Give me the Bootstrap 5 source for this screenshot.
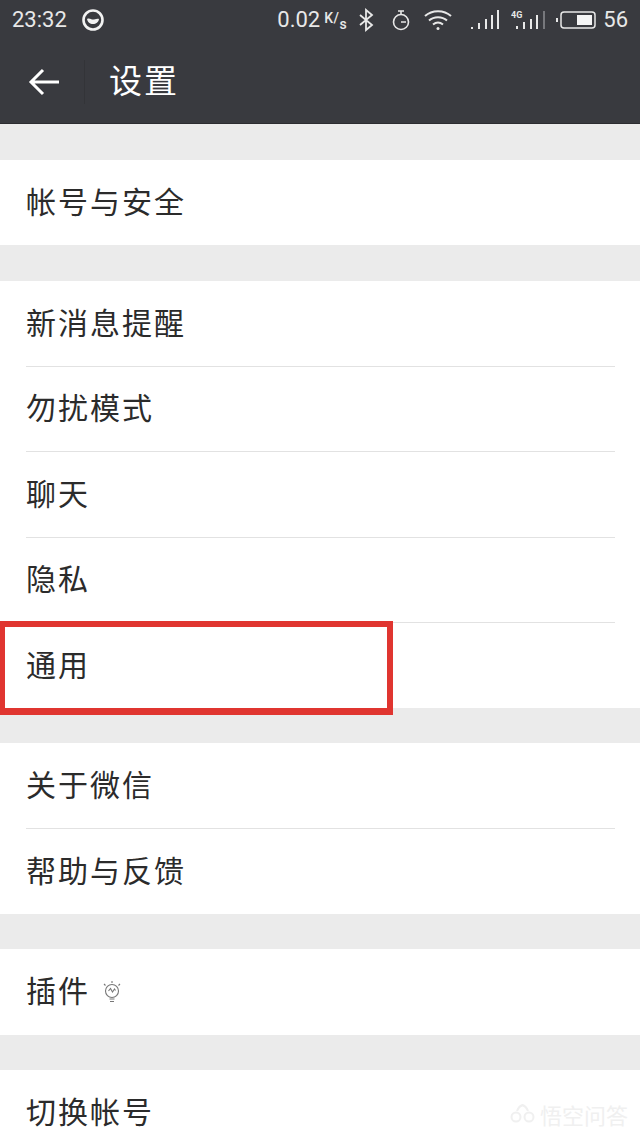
<!DOCTYPE html>
<html lang="zh-CN">
<head>
    <meta charset="UTF-8">
    <title>设置</title>
    <link href="https://cdn.jsdelivr.net/npm/bootstrap@5.3.2/dist/css/bootstrap.min.css" rel="stylesheet">
    <style>
        html, body {
            height: 1138px;
            overflow: hidden;
        }
        body {
            background-color: #ebebeb;
            font-family: "Noto Sans CJK SC", sans-serif;
        }
        .app-header {
            background-color: #393a3f;
            height: 124px;
            border-bottom: 1px solid #2c2c30;
        }
        .status-bar {
            height: 40px;
            padding: 0 12px;
            color: #e8e8e8;
            font-family: Roboto, sans-serif;
            font-size: 22px;
            line-height: 1;
        }
        .app-dot { margin-left: 14px; }
        .speed-unit {
            font-size: 14px;
            font-weight: 500;
            margin: -4px 11px 0 4px;
            letter-spacing: .5px;
            white-space: nowrap;
        }
        .speed-unit sub {
            font-size: 14px;
            bottom: -.4em;
            top: auto;
        }
        .gap-timer { margin-left: 17px; }
        .gap-wifi { margin-left: 13px; }
        .gap-signal { margin-left: 18px; }
        .gap-net { margin-left: 12px; }
        .gap-batt { margin-left: 9px; }
        .gap-level { margin-left: 7px; }
        .title-bar {
            height: 83px;
        }
        .back-btn {
            width: 85px;
            height: 44px;
            padding-left: 28px;
            border-right: 1px solid #333438;
        }
        .page-title {
            color: #fff;
            font-size: 33px;
            letter-spacing: 2px;
            margin-left: 24px;
            line-height: 1;
            padding-bottom: 5px;
        }
        .setting-group {
            margin-top: 35px;
            background-color: #fff;
        }
        .top-group {
            margin-top: 36px;
        }
        .setting-row {
            height: 85.4px;
            margin: 0 25px 0 26px;
            padding: 0 0 5px !important;
            background: transparent;
            color: #2b2b2b;
            font-size: 30px;
            letter-spacing: 2px;
            line-height: 1;
            border-color: #e2e2e2;
        }
        .bulb-icon {
            margin: 5px 0 0 12px;
        }
        .mark-box {
            position: absolute;
            left: 0;
            top: 621px;
            width: 393px;
            height: 94px;
            border: solid #e03530;
            border-width: 6px 6px 7px 5px;
        }
        .wm-wrap {
            position: absolute;
            left: 509px;
            top: 1101px;
            color: #f0f0f0;
            font-size: 22px;
            line-height: 1.2;
        }
    </style>
</head>
<body>

<header class="app-header">
    <div class="status-bar d-flex align-items-center">
        <span>23:32</span>
        <svg class="app-dot" width="24" height="24" viewBox="0 0 24 24">
            <circle cx="12" cy="12" r="9.5" fill="none" stroke="#f2f2f2" stroke-width="2.6"/>
            <path d="M6 11c3-1.5 4 1 7 .5 2-.3 3.500-1 5-.5-.5 3.500-3 5-6 5s-5.500-2-6-5z" fill="#f2f2f2"/>
        </svg>
        <span class="ms-auto">0.02</span>
        <span class="speed-unit">K/<sub>s</sub></span>
        <svg width="16" height="24" viewBox="0 0 16 24" fill="none" stroke="#e8e8e8" stroke-width="1.800">
            <path d="M2 7l12 10-6 5V2l6 5L2 17"/>
        </svg>
        <svg class="gap-timer" width="20" height="24" viewBox="0 0 20 24" fill="none" stroke="#e8e8e8" stroke-width="1.600">
            <circle cx="10" cy="14" r="7.500"/>
            <path d="M7 3h6M10 3v3M10 14h5"/>
        </svg>
        <svg class="gap-wifi" width="28" height="22" viewBox="0 0 28 22" fill="none" stroke="#e8e8e8" stroke-width="2">
            <path d="M1 7c7-6.500 19-6.500 26 0M5 11.500c5-4.500 13-4.500 18 0M9 15.500c3-2.500 7-2.500 10 0"/>
            <circle cx="14" cy="19.500" r="1.500" fill="#e8e8e8" stroke="none"/>
        </svg>
        <svg class="gap-signal" width="29" height="22" viewBox="0 0 29 22" fill="#e8e8e8">
            <rect x="1" y="18" width="2" height="2"/>
            <rect x="8" y="14" width="2" height="6"/>
            <rect x="15" y="10" width="2" height="10"/>
            <rect x="21" y="6" width="2" height="14"/>
            <rect x="27" y="1" width="2" height="19"/>
        </svg>
        <svg class="gap-net" width="36" height="24" viewBox="0 0 36 24" fill="#e8e8e8">
            <text x="0" y="10" font-family="Roboto, sans-serif" font-size="9" font-weight="700">4G</text>
            <rect x="5" y="18" width="2" height="3"/>
            <rect x="12" y="14" width="2" height="7"/>
            <rect x="19" y="11" width="2" height="10"/>
            <rect x="25" y="7" width="2" height="14"/>
            <rect x="32" y="3" width="2" height="18" fill="#77787c"/>
        </svg>
        <svg class="gap-batt" width="40" height="20" viewBox="0 0 40 20">
            <rect x="0" y="8" width="2" height="4" fill="#e8e8e8"/>
            <rect x="5" y="2" width="34" height="16" rx="3" fill="none" stroke="#e8e8e8" stroke-width="1.500"/>
            <rect x="21" y="5" width="15" height="10" fill="#f5f5f5"/>
        </svg>
        <span class="gap-level">56</span>
    </div>
    <div class="title-bar d-flex align-items-center">
        <div class="back-btn d-flex align-items-center">
            <svg width="32" height="28" viewBox="0 0 32 28" fill="none" stroke="#fff" stroke-width="3">
                <path d="M15 2L3 14l12 12M3 14h28"/>
            </svg>
        </div>
        <span class="page-title">设置</span>
    </div>
</header>

<main>
    <div class="setting-group list-group list-group-flush rounded-0 top-group">
        <div class="setting-row list-group-item d-flex align-items-center">帐号与安全</div>
    </div>
    <div class="setting-group list-group list-group-flush rounded-0 top-group">
        <div class="setting-row list-group-item d-flex align-items-center">新消息提醒</div>
        <div class="setting-row list-group-item d-flex align-items-center">勿扰模式</div>
        <div class="setting-row list-group-item d-flex align-items-center">聊天</div>
        <div class="setting-row list-group-item d-flex align-items-center">隐私</div>
        <div class="setting-row list-group-item d-flex align-items-center">通用</div>
    </div>
    <div class="setting-group list-group list-group-flush rounded-0">
        <div class="setting-row list-group-item d-flex align-items-center">关于微信</div>
        <div class="setting-row list-group-item d-flex align-items-center">帮助与反馈</div>
    </div>
    <div class="setting-group list-group list-group-flush rounded-0">
        <div class="setting-row list-group-item d-flex align-items-center">
            插件
            <svg class="bulb-icon" width="20" height="26" viewBox="0 0 20 26" fill="none" stroke="#777" stroke-width="1.100">
                <circle cx="10" cy="12" r="6.500"/>
                <path d="M6.500 12l2-2.500 2 3.500 2-3 1 1.500M7.500 20h5M8 22.500h4M10 2v2M2 5l1.500 1.500M18 5l-1.500 1.500"/>
            </svg>
        </div>
    </div>
    <div class="setting-group list-group list-group-flush rounded-0">
        <div class="setting-row list-group-item d-flex align-items-center">切换帐号</div>
    </div>
</main>

<div class="mark-box"></div>
<div class="wm-wrap d-flex align-items-center">
    <svg class="me-1" width="27" height="20" viewBox="0 0 27 20" fill="none" stroke="#f0f0f0" stroke-width="2">
        <circle cx="7" cy="13" r="4.500"/>
        <circle cx="20" cy="13" r="4.500"/>
        <path d="M8 7c1-3 3-5 5.500-6 2.500 1 4.500 3 5.500 6"/>
    </svg>
    悟空问答
</div>

<script src="https://cdn.jsdelivr.net/npm/bootstrap@5.3.2/dist/js/bootstrap.bundle.min.js"></script>
</body>
</html>
